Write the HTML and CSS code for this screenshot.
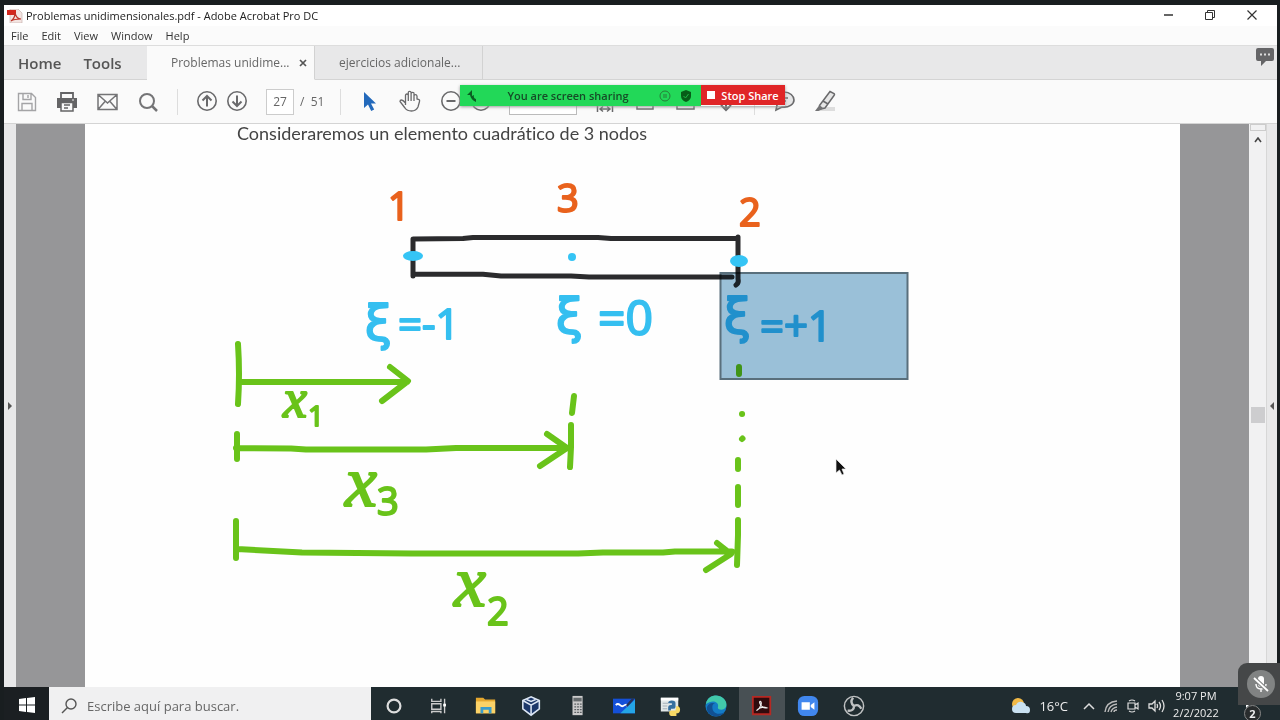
FILE: index.html
```html
<!DOCTYPE html>
<html lang="es">
<head>
<meta charset="utf-8">
<title>Problemas unidimensionales.pdf - Adobe Acrobat Pro DC</title>
<link rel="stylesheet" href="styles.css">
</head>
<body>
<div class="screen">
  <main class="window">
    <header class="titlebar">
      <svg class="app-icon" width="16" height="14" viewBox="0 0 16 14"><path d="M3 0h8l4 4v10H3z" fill="#f3e4e1" stroke="#c9b5b2" stroke-width=".7"/><path d="M0 1h9v5H0z" fill="#d3271d"/><path d="M4 12c3-2 4-5 4-8 1 4 3 6 6 6-4 0-7 0-10 2z" fill="none" stroke="#bd3328" stroke-width="1.2"/></svg>
      <h1 class="title">Problemas unidimensionales.pdf - Adobe Acrobat Pro DC</h1>
      <div class="window-controls">
        <button aria-label="Minimize"><svg width="12" height="12" viewBox="0 0 12 12"><path d="M2 5h9" stroke="#111" stroke-width="1.300"/></svg></button>
        <button aria-label="Restore"><svg width="12" height="12" viewBox="0 0 12 12" fill="none" stroke="#333"><path d="M1.500 2.500h7v7h-7zM3.500 2.500v-2h7v7h-2"/></svg></button>
        <button aria-label="Close"><svg width="12" height="12" viewBox="0 0 12 12"><path d="M1.500 .5l9 9M10.500 .5l-9 9" stroke="#333" stroke-width="1.200"/></svg></button>
      </div>
    </header>
    <nav class="menubar" aria-label="Menu">
      <button>File</button><button>Edit</button><button>View</button><button>Window</button><button>Help</button>
    </nav>
    <nav class="tabs" aria-label="Documents">
      <div class="main-tabs"><button>Home</button><button>Tools</button></div>
      <div class="tab active"><button class="tab-name">Problemas unidime...</button><button class="tab-close" aria-label="Close tab"><svg width="8" height="8" viewBox="0 0 8 8"><path d="M1 1l6 6M7 1L1 7" stroke="#555" stroke-width="1.700"/></svg></button></div>
      <div class="tab"><button class="tab-name">ejercicios adicionale...</button></div>
      <button class="chat" aria-label="Comments"><svg width="20" height="20" viewBox="0 0 20 20"><path d="M3 0h14q2 0 2 2v9q0 2-2 2h-6l-5 5v-5H3q-2 0-2-2V2q0-2 2-2z" fill="#656567"/><path d="M5 6.500h2M9 6.500h2M13 6.500h2" stroke="#ddd" stroke-width="2"/></svg></button>
    </nav>
    <div class="toolbar">
      <div class="group">
        <button aria-label="Save"><svg viewBox="0 0 24 24" fill="none" stroke="#a4a4a6" stroke-width="1.400"><path d="M3.500 3.500h13l4 4v13h-17zM8 3.500v6h8v-6M13 5v3M7 20.500v-7h10v7"/></svg></button>
        <button aria-label="Print"><svg viewBox="0 0 24 24" fill="none" stroke="#646466" stroke-width="1.800"><path d="M6 8V3h12v5"/><path d="M2 8h20v10h-4v-5H6v5H2z" fill="#646466" stroke="none"/><path d="M6 12.500h12V21H6zM9 15h6M9 18h4" stroke-width="1.500"/><path d="M17 10h2" stroke="#eee" stroke-width="1.200"/></svg></button>
        <button aria-label="Email"><svg viewBox="0 0 24 24" fill="none" stroke="#747476" stroke-width="1.500"><path d="M3 4.500h19v15H3zM3 4.500l9.500 8.500L22 4.500M3 19.500l7-8M22 19.500l-7-8"/></svg></button>
        <button aria-label="Search"><svg viewBox="0 0 24 24" fill="none" stroke="#747476" stroke-width="2"><circle cx="12" cy="11" r="7"/><path d="M17 16l5 5" stroke-width="2.500"/></svg></button>
      </div>
      <i class="sep first"></i>
      <div class="group tight">
        <button aria-label="Previous page"><svg viewBox="0 0 24 24" fill="none" stroke="#69696b" stroke-width="1.600"><circle cx="12" cy="11" r="9.200"/><path d="M12 16.500v-10M7.500 10.500L12 6l4.500 4.500" stroke-width="2"/></svg></button>
        <button aria-label="Next page"><svg viewBox="0 0 24 24" fill="none" stroke="#69696b" stroke-width="1.600"><circle cx="12" cy="11" r="9.200"/><path d="M12 5.500v10M7.500 11.500L12 16l4.500-4.500" stroke-width="2"/></svg></button>
      </div>
      <label class="pager"><input value="27" aria-label="Page"><span>/&nbsp; 51</span></label>
      <i class="sep"></i>
      <div class="group">
        <button aria-label="Select"><svg viewBox="0 0 24 24"><path d="M7 2v16l4-3.500 3.200 6.500 3-1.500-3.200-6h5z" fill="#2369bb"/></svg></button>
        <button aria-label="Pan"><svg viewBox="0 0 24 24" fill="none" stroke="#69696b" stroke-width="1.300"><path d="M7.500 15V5.500q0-1.500 1.400-1.500t1.400 1.500V11 2.800q0-1.500 1.400-1.500t1.400 1.500V11 3.800q0-1.500 1.500-1.500t1.400 1.500V11 6q0-1.300 1.400-1.300T19 6v3l2 .5q1 .5.500 2L20 17q-2 4-6.500 4Q9 21 7 18l-5-6.500q0-1.500 1.500-1.500t4 3"/></svg></button>
        <button aria-label="Zoom out"><svg viewBox="0 0 24 24" fill="none" stroke="#69696b" stroke-width="1.600"><circle cx="12" cy="11" r="9.200"/><path d="M7.500 11h9" stroke-width="2"/></svg></button>
      </div>
      <div class="group under">
        <button aria-label="Zoom in"><svg viewBox="0 0 24 24" fill="none" stroke="#69696b" stroke-width="1.600"><circle cx="12" cy="11" r="9.200"/><path d="M7.500 11h9M12 6.500v9"/></svg></button>
        <input class="zoom" aria-label="Zoom level">
        <button aria-label="Fit width"><svg viewBox="0 0 24 24" fill="none" stroke="#69696b" stroke-width="1.500"><path d="M4.500 2h15v12h-15zM4.500 16v6M19.500 16v6M7 19h10M10 16.500L7 19l3 2.500M14 16.500l3 2.500-3 2.500"/></svg></button>
        <button aria-label="Fit page"><svg viewBox="0 0 24 24" fill="none" stroke="#69696b" stroke-width="1.500"><path d="M4 4h16v15H4zM12 7v8M9 12l3 3 3-3"/></svg></button>
        <button aria-label="Reading mode"><svg viewBox="0 0 24 24" fill="none" stroke="#69696b" stroke-width="1.500"><path d="M4 4h17v15H4zM7 15h5"/></svg></button>
        <button aria-label="Scroll"><svg viewBox="0 0 24 24" fill="none" stroke="#69696b" stroke-width="2"><path d="M13 4v14M8 15l5 5 5-5"/></svg></button>
      </div>
      <i class="sep last"></i>
      <div class="group">
        <button aria-label="Add comment"><svg viewBox="0 0 24 24" fill="#e5e5e6" stroke="#69696b" stroke-width="1.600"><path d="M4 20l1-5C2 9 6 2 12 2s10 4 10 8-5 8-12 7zM9 8h7M9 11h5"/></svg></button>
        <button aria-label="Highlight"><svg viewBox="0 0 24 24"><path d="M7 17h15v4H4z" fill="#ddd"/><path d="M17 1.500l4 2q1 1 0 2L12 18l-5 1-.5-3.500zM10 11l5 3" fill="#e6e6e6" stroke="#69696b" stroke-width="1.500"/><path d="M6.500 15l4 3.500-5 2.500H2z" fill="#737375"/></svg></button>
      </div>
    </div>
    <section class="workspace">
      <button class="pane-toggle" aria-label="Open left pane"><svg width="6" height="8" viewBox="0 0 6 8"><path d="M1 0l4 4-4 4z" fill="#555"/></svg></button>
      <div class="canvas">
        <article class="page">
          <p class="lead">Consideraremos un elemento cuadrático de 3 nodos</p>
          <svg class="drawing" viewBox="85 150 1095 537" preserveAspectRatio="xMinYMin meet">
            <g class="ink black"><path d="M413 239l50-.5 10-1h125l13 1H738M413 239v37M413 274l70 .3 18 1.700h70l18 1H732M738 237v42q1 4-2 6"/></g>
            <g class="dots"><ellipse cx="413" cy="256" rx="10" ry="5"/><ellipse cx="572" cy="257" rx="4" ry="4"/><ellipse cx="739" cy="261" rx="9" ry="6"/></g>
            <g class="node"><text x="388" y="220">1</text><text x="557" y="212">3</text><text x="739" y="226">2</text></g>
            <g class="coord"><text class="xi" x="365" y="340">ξ</text><text x="398" y="339">=-1</text><text class="xi" x="556" y="333">ξ</text><text class="wide" x="598" y="335">=0</text><text class="xi" x="724" y="333">ξ</text><text x="760" y="341">=+1</text></g>
            <g class="ink green"><path d="M238 344q2 30 0 60M239 382H407M390 367l18 14-26 20"/><path d="M237 434v25M236 448l55 .5 15 1h120l30-1.500h112M547 434l20 14-27 18M574 396l-2 17M571 425v22l-1 20"/><path d="M236 521v37M237 549l65 3.500 110 1h166l25-1h60l12-1h57M717 543l14 11-25 16M738 520v15l-1 30M739 367v7M738 460v9M738 487v18"/><path d="M742 414h.1M742 439l.500-.500"/></g>
            <g class="var"><text x="283" y="417">x</text><text class="sub" x="308" y="426">1</text><text class="large" x="345" y="506">x</text><text class="sub mid" x="377" y="515">3</text><text class="large" x="454" y="606">x</text><text class="sub mid" x="487" y="625">2</text></g>
            <rect class="selection" x="720.500" y="273" width="187" height="106"/>
            <path d="M836 459v14l3.500-3 2.500 5 2-1-2-5h4z" fill="#111" stroke="#eee" stroke-width=".7"/>
          </svg>
        </article>
      </div>
      <div class="scrollbar"><i class="scroll-top"></i><svg width="8" height="6" viewBox="0 0 8 6"><path d="M1 5l3-4 3 4" fill="none" stroke="#444" stroke-width="1.600"/></svg><i class="space"></i><i class="thumb"></i><i class="space"></i></div>
      <button class="pane-toggle right" aria-label="Open right pane"><svg width="6" height="8" viewBox="0 0 6 8"><path d="M5 0L1 4l4 4z" fill="#555"/></svg></button>
    </section>
    <aside class="share">
      <div class="sharing">
        <svg width="10" height="12" viewBox="0 0 10 12"><path d="M5 0L0 5h3q1 5 6 7V9Q6 8 7 5L5 6z" fill="#0b5c22"/></svg>
        <span>You are screen sharing</span>
        <svg width="12" height="12" viewBox="0 0 12 12" fill="none" stroke="#277c38"><circle cx="6" cy="6" r="5"/><path d="M4 5h4M4 7h4"/></svg>
        <svg width="10" height="12" viewBox="0 0 10 12"><path d="M5 0l5 2v4q0 4-5 6-5-2-5-6V2z" fill="#075d18"/><path d="M2.500 6l2 2 3-4" fill="none" stroke="#20b947"/></svg>
      </div>
      <button class="stop"><i></i>Stop Share</button>
    </aside>
  </main>
  <footer class="taskbar">
    <button class="start" aria-label="Start"><svg width="16" height="16" viewBox="0 0 16 16" fill="#fff"><path d="M0 2l7-1v6.500H0zM8 1l8-1v7.500H8zM0 8.500h7V15l-7-1zM8 8.500h8V16l-8-1z"/></svg></button>
    <label class="search"><svg width="16" height="16" viewBox="0 0 16 16" fill="none" stroke="#555" stroke-width="1.400"><circle cx="10" cy="6" r="5"/><path d="M6.500 9.500L1 15"/></svg><input placeholder="Escribe aquí para buscar." aria-label="Buscar"></label>
    <div class="apps">
      <button aria-label="Cortana"><svg viewBox="0 0 24 24" fill="none" stroke="#ddd" stroke-width="2.400"><circle cx="12" cy="12" r="7"/></svg></button>
      <button aria-label="Task view"><svg viewBox="0 0 24 24" fill="none" stroke="#ccc" stroke-width="1.500"><path d="M3 4v3h10V4M3 9.500h10v6H3zM3 20v-2h10v2M17 4v16"/><path d="M15.500 9.500h3v3h-3z" fill="#fff" stroke="none"/></svg></button>
      <button aria-label="File Explorer"><svg viewBox="0 0 24 24"><path d="M1 3h8l2 2h11v15H1z" fill="#e5a72e"/><path d="M1 7h21v13H1z" fill="#fbd267"/><path d="M6 20v-7h12v7h-3v-4H9v4z" fill="#3a9ccc"/></svg></button>
      <button aria-label="VirtualBox"><svg viewBox="0 0 24 24" stroke="#dce6f4" stroke-width="1.700"><path d="M2 6l9-4 9 4v9l-9 7-9-7z" fill="#1c386a"/><path d="M2 6l9 5 9-5M11 11v10M6 5l5 2 5-2" fill="none"/></svg></button>
      <button aria-label="Calculator"><svg viewBox="0 0 24 24"><path d="M6 1h11v21H6z" fill="#ccc"/><path d="M7 3h9v4H7z" fill="#656b6d"/><path d="M8 10h8M8 13h8M8 16h8M8 19h8" stroke="#5b6063" stroke-width="1.500" stroke-dasharray="2 1"/></svg></button>
      <button aria-label="Whiteboard"><svg viewBox="0 0 24 24"><path d="M0 4h24v16H0z" fill="#1450d8"/><path d="M8 20L24 5v15z" fill="#24a5e6"/><path d="M3 11c4-4 5 3 8 1s4-2 5 0" fill="none" stroke="#fff" stroke-width="2"/><path d="M15 12l7-8" stroke="#253358" stroke-width="2.500"/></svg></button>
      <button aria-label="Python"><svg viewBox="0 0 24 24"><path d="M2 3h19v15H2z" fill="#e2e8e8"/><path d="M2 3h19v3H2z" fill="#fff"/><path d="M4 9h6M4 12h5M4 15h5" stroke="#9fabb3"/><path d="M10 17v-4q0-2 3-2h1V9h-4q0-3 4-3t4 3v4q0 2-3 2h-2v2z" fill="#3670a0"/><path d="M19 12q4 0 4 4t-4 4v3h-6q-2-1-2-4 0-2 3-2h4z" fill="#f7d965"/></svg></button>
      <button aria-label="Edge"><svg viewBox="0 0 24 24"><circle cx="12" cy="12" r="11.500" fill="#147bc5"/><path d="M1 10C2 3 7 .5 12 .5c7 0 13 6 11 12-2 5-9 4-9 1 2-6-6-9-13-3.500z" fill="#42c9aa"/><path d="M8 13c0 7 6 9 13 6-5 7-18 5-19-4 0-5 5-7 9-6-2 0-3 2-3 4z" fill="#115092"/></svg></button>
      <button class="current" aria-label="Acrobat"><svg viewBox="0 0 24 24"><path d="M2 2h19v19H2z" fill="#300b0d" stroke="#b62923" stroke-width="2"/><path d="M6 17c6-4 6-10 4-10s1 8 7 7c-4-2-8 0-11 3z" fill="none" stroke="#eee" stroke-width="1.300"/></svg></button>
      <button aria-label="Zoom"><svg viewBox="0 0 24 24"><rect x="1" y="1" width="22" height="22" rx="7" fill="#4187ee"/><path d="M5 8h9v8H5zM15 11l4-3v8l-4-3z" fill="#fff"/></svg></button>
      <button aria-label="OBS"><svg viewBox="0 0 24 24" fill="none" stroke="#bfc1c2" stroke-width="1.600"><circle cx="12" cy="12" r="10.500"/><path d="M11 3q-4 5 1 9M20 15q-3-6-8-3M5 17q7 1 7-5" stroke-width="2.600"/></svg></button>
    </div>
    <div class="tray">
      <button class="weather"><svg width="20" height="18" viewBox="0 0 20 18"><circle cx="7" cy="7" r="6" fill="#f1b946"/><path d="M5 16q-4 0-4-4t4-4q2-4 6-3t4 4q4 0 4 4t-4 3z" fill="#c9e1f1"/></svg><span>16°C</span></button>
      <div class="status">
        <svg width="14" height="14" viewBox="0 0 14 14" fill="none" stroke="#ddd" stroke-width="1.500"><path d="M2 10l5-5 5 5"/></svg>
        <svg width="14" height="14" viewBox="0 0 14 14" fill="none" stroke="#bbb" stroke-width="1.400"><path d="M1 13Q2 3 13 2M4 13q1-7 9-8M7 13q1-4 6-5M10 13q0-2 3-2"/></svg>
        <svg width="14" height="14" viewBox="0 0 14 14" fill="none" stroke="#ddd" stroke-width="1.200"><path d="M2 4h7v6H2zM9 6l3-2v6L9 8M3 2q3-2 6 0M3 12q3 2 6 0"/></svg>
        <svg width="18" height="14" viewBox="0 0 18 14" fill="none" stroke="#ddd" stroke-width="1.300"><path d="M1 5h3l3-3v10L4 9H1zM9 5q1 2 0 4M11 3q3 4 0 8M14 1q4 6 0 12"/></svg>
      </div>
      <time class="clock"><span>9:07 PM</span><span>2/2/2022</span></time>
      <button class="notice" aria-label="Notifications"><svg width="14" height="14" viewBox="0 0 14 14"><path d="M0 0h14v8H6l-3 3V8H0z" fill="#fff"/></svg><b>2</b></button>
    </div>
  </footer>
  <button class="mic" aria-label="Microphone muted"><svg width="28" height="28" viewBox="0 0 28 28"><circle cx="14" cy="14" r="14" fill="#818383"/><path d="M11 9q0-3 3-3t3 3v5q0 3-3 3t-3-3z" fill="#fff"/><path d="M9 14q0 5 5 5t5-5M14 19v3" fill="none" stroke="#fff" stroke-width="1.400"/><path d="M7 8l14 13" stroke="#818383" stroke-width="4"/><path d="M7 8l14 13" stroke="#fff" stroke-width="1.800"/></svg></button>
</div>
</body>
</html>
```

FILE: styles.css
```css
* { box-sizing: border-box; }
body { margin: 0; font-family: "Open Sans", "Noto Sans", sans-serif; color: #333; background: #191e20; }
button, input { font: inherit; color: inherit; border: 0; padding: 0; margin: 0; background: none; }
button { display: flex; align-items: center; justify-content: center; white-space: nowrap; }
svg { display: block; flex: none; }
.screen { position: relative; display: flex; flex-direction: column; min-height: 100vh; padding: 5px 3px 0 4px; }
.window { position: relative; flex: 1; display: flex; flex-direction: column; background: #fff; }
.titlebar { display: flex; align-items: center; height: 21px; padding: 0 4px 0 3px; background: #fff; }
.title { margin: 0 0 0 3px; flex: 1; font: 11px "Open Sans", sans-serif; color: #222; }
.window-controls { display: flex; }
.window-controls button { width: 42px; height: 20px; }
.menubar { display: flex; gap: 13px; height: 19px; padding-left: 7px; background: #fbfbfb; font-size: 11px; }
.tabs { display: flex; height: 35px; background: #e8e8e9; border-top: 1px solid #ddd; border-bottom: 1px solid #d4d4d4; }
.main-tabs { display: flex; gap: 22px; padding-left: 14px; width: 143px; font-size: 15px; font-weight: 600; color: #555; }
.tab { display: flex; width: 168px; border-right: 1px solid #d2d2d2; font-size: 12px; color: #666; padding-left: 24px; margin-bottom: -1px; border-bottom: 1px solid #d4d4d4; }
.tab.active { background: #fafafa; border-bottom-color: #fafafa; }
.tab-close { margin-left: 9px; }
.chat { margin-left: auto; align-self: flex-start; padding: 2px 2px 0 0; }
.toolbar { display: flex; align-items: center; height: 44px; padding-left: 11px; background: #fafafa; border-bottom: 1px solid #d4d4d4; }
.group { display: flex; align-items: center; gap: 17px; }
.group:first-child { gap: 16px; }
.group.tight { gap: 6px; }
.group.under { gap: 16px; margin-left: 6px; }
.toolbar button, .toolbar svg { width: 24px; height: 24px; }
.sep { width: 1px; height: 26px; margin: 0 16px; background: #ddd; }
.sep.first { margin: 0 17px 0 18px; }
.sep.last { margin: 0 17px; }
.pager { display: flex; align-items: center; gap: 6px; width: 74px; margin: 0 0 0 17px; font-size: 12px; color: #666; }
.pager input { width: 28px; height: 26px; border: 1px solid #ccc; text-align: center; background: #fff; }
.pager + .sep { margin-left: 0; }
.zoom { width: 68px; height: 26px; border: 1px solid #bbb; background: #fff; }
.workspace { flex: 1; display: flex; min-height: 0; }
.pane-toggle { width: 12px; background: #e8e8e9; }
.pane-toggle.right { width: 11px; border-left: 1px solid #d7d7d7; }
.canvas { flex: 1; display: flex; padding: 0 69px; background: #969698; min-width: 0; }
.page { flex: 1; display: flex; flex-direction: column; background: #fefefe; min-width: 0; }
.lead { height: 26px; margin: 0; padding-left: 152px; line-height: 18px; font-size: 18px; font-family: Lato, sans-serif; font-variant-ligatures: none; color: #444; }
.drawing { width: 100%; height: auto; }
.ink { fill: none; stroke-linecap: round; stroke-linejoin: round; stroke-width: 5; }
.black { stroke: #2b2b2d; }
.green { stroke: #69c31a; stroke-width: 6; }
.dots { fill: #35c4f5; }
.node, .coord, .var { font-family: "Open Sans", sans-serif; stroke-linejoin: round; stroke-width: 2; }
.node { font-size: 38px; fill: #e9621d; stroke: #e9621d; }
.coord { font-size: 42px; fill: #35bff0; stroke: #35bff0; }
.wide { font-size: 48px; }
.xi { font-family: "DejaVu Sans", sans-serif; font-size: 48px; }
.var { font-family: "Liberation Serif", serif; font-style: italic; font-size: 54px; fill: #69c31a; stroke: #69c31a; }
.large { font-size: 72px; }
.sub { font-family: "Open Sans", sans-serif; font-style: normal; font-size: 28px; }
.mid { font-size: 38px; }
.selection { fill: #9bc1d9; stroke: #596f7c; stroke-width: 2; mix-blend-mode: multiply; }
.scrollbar { display: flex; flex-direction: column; align-items: center; width: 17px; background: #f1f1f2; }
.scroll-top { width: 16px; height: 7px; margin-bottom: 6px; border: 1px solid #ccc; }
.thumb { width: 14px; height: 16px; background: #cdcdcf; }
.space { flex: 1; }
.share { position: absolute; left: 456px; top: 80px; display: flex; font-size: 11px; font-weight: 600; box-shadow: 0 1px 3px #999; }
.sharing { display: flex; align-items: center; width: 241px; height: 21px; gap: 10px; padding-left: 7px; background: #22d858; color: #164b27; }
.sharing span { flex: 1; text-align: center; white-space: nowrap; }
.sharing svg:last-child { margin-right: 10px; }
.stop { width: 84px; height: 20px; gap: 6px; background: #e02527; color: #fff; }
.stop i { width: 8px; height: 8px; background: #fff; }
.taskbar { display: flex; height: 33px; color: #eee; background: #202c30; margin-right: -3px; }
.start { width: 45px; background: #1b1f22; padding-top: 3px; }
.search { display: flex; align-items: center; gap: 10px; width: 322px; padding: 4px 12px 0; background: #f0f0f1; color: #555; font-size: 13px; }
.search input { flex: 1; min-width: 0; }
.search input::placeholder { color: #666; opacity: 1; }
.apps { display: flex; }
.apps button { width: 46px; padding-top: 4px; }
.apps svg { width: 22px; height: 22px; }
.apps .current { background: #485054; }
.tray { display: flex; align-items: center; margin-left: auto; padding-right: 18px; }
.weather { gap: 8px; padding-top: 4px; font-size: 13px; }
.status { display: flex; align-items: center; gap: 8px; margin-left: 14px; padding-top: 4px; }
.clock { display: flex; flex-direction: column; width: 56px; margin-left: 2px; text-align: center; font-size: 11px; line-height: 17px; }
.notice { position: relative; margin-left: 14px; width: 24px; height: 30px; }
.notice b { position: absolute; left: 6px; top: 16px; width: 17px; height: 17px; border: 1px solid #888; border-radius: 50%; background: #292c2d; font-size: 11px; line-height: 15px; }
.mic { position: absolute; right: 0; bottom: 15px; width: 42px; height: 42px; padding-left: 3px; border-radius: 9px 0 0 0; background: #454748; }
```
